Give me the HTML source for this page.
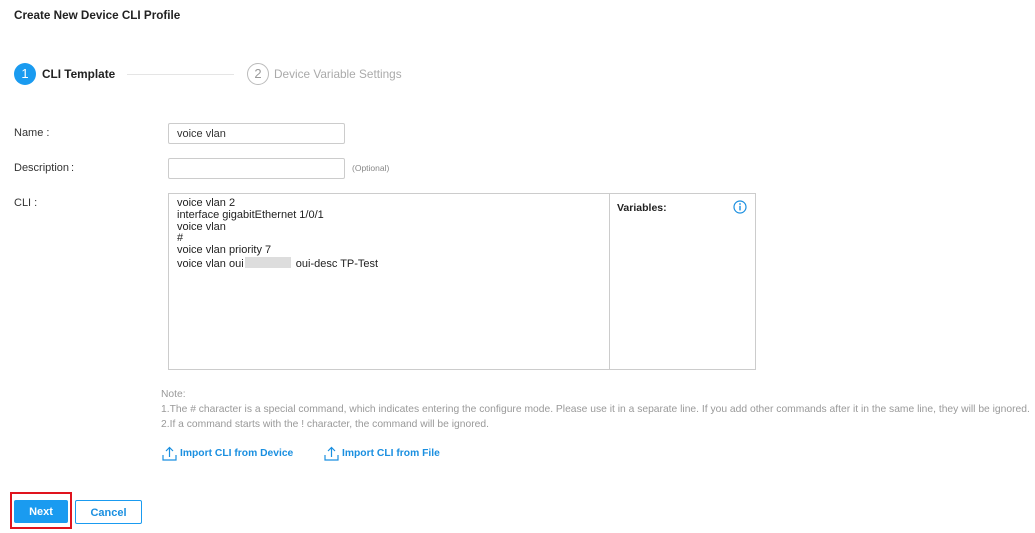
<!DOCTYPE html>
<html><head><style>
body{margin:0;width:1035px;height:533px;background:#fff;font-family:"Liberation Sans",sans-serif;position:relative;overflow:hidden;color:#333}
.a{position:absolute;white-space:nowrap}
.inp{position:absolute;border:1px solid #ccc;border-radius:2px;box-sizing:border-box;font-size:11px;padding:4px 8px;color:#333}
.lbl{font-size:11px;color:#333}
.note{font-size:10.3px;color:#999}
.lnk{font-size:10.3px;font-weight:bold;color:#1a8fe0}
</style></head><body>
<div class="a" style="left:14px;top:9px;font-size:11.7px;font-weight:bold;color:#222">Create New Device CLI Profile</div>
<div class="a" style="left:14px;top:63px;width:22px;height:22px;border-radius:50%;background:#1a9bf0;color:#fff;font-size:13px;text-align:center;line-height:22px">1</div>
<div class="a" style="left:42px;top:67px;font-size:11.8px;font-weight:bold;color:#222">CLI Template</div>
<div class="a" style="left:127px;top:74px;width:107px;height:1px;background:#e5e5e5"></div>
<div class="a" style="left:247px;top:63px;width:20px;height:20px;border-radius:50%;border:1px solid #bbb;color:#999;font-size:13px;text-align:center;line-height:20px">2</div>
<div class="a" style="left:274px;top:67px;font-size:11.8px;color:#aaa">Device Variable Settings</div>

<div class="a lbl" style="left:14px;top:127px">Name<span style="margin-left:3px">:</span></div>
<div class="inp" style="left:168px;top:123px;width:177px;height:21px">voice vlan</div>
<div class="a lbl" style="left:14px;top:162px">Description<span style="margin-left:2px">:</span></div>
<div class="inp" style="left:168px;top:158px;width:177px;height:21px"></div>
<div class="a" style="left:352px;top:163px;font-size:8.5px;color:#888">(Optional)</div>
<div class="a lbl" style="left:14px;top:197px">CLI<span style="margin-left:3px">:</span></div>
<div class="a" style="left:168px;top:193px;width:586px;height:175px;border:1px solid #ccc"></div>
<div class="a" style="left:609px;top:194px;width:1px;height:175px;background:#ccc"></div>
<div class="a" style="left:177px;top:198px;font-size:11px;line-height:11.8px;color:#222">voice vlan 2<br>interface gigabitEthernet 1/0/1<br>voice vlan<br>#<br>voice vlan priority 7<br>voice vlan oui <span style="display:inline-block;width:46px;height:11px;background:#ddd;vertical-align:-1px;margin:0 2px 0 -2px"></span> oui-desc TP-Test</div>
<div class="a" style="left:617px;top:202px;font-size:10.5px;font-weight:bold;color:#222">Variables:</div>
<svg class="a" style="left:733px;top:200px" width="14" height="14" viewBox="0 0 14 14"><circle cx="7" cy="7" r="6" fill="none" stroke="#1a8fe0" stroke-width="1.2"/><circle cx="7" cy="4" r=".9" fill="#1a8fe0"/><rect x="6.3" y="5.8" width="1.4" height="4.6" fill="#1a8fe0"/></svg>

<div class="a note" style="left:161px;top:389px">Note:</div>
<div class="a note" style="left:161px;top:404px">1.The # character is a special command, which indicates entering the configure mode. Please use it in a separate line. If you add other commands after it in the same line, they will be ignored.</div>
<div class="a note" style="left:161px;top:419px">2.If a command starts with the ! character, the command will be ignored.</div>

<svg class="a" style="left:162px;top:446px" width="15" height="15" viewBox="0 0 15 15" fill="none" stroke="#1a8fe0" stroke-width="1.2"><path d="M1 9v5h13V9M7.5 11V2M4 5l3.5-3.5L11 5"/></svg>
<div class="a lnk" style="left:180px;top:448px">Import CLI from Device</div>
<svg class="a" style="left:324px;top:446px" width="15" height="15" viewBox="0 0 15 15" fill="none" stroke="#1a8fe0" stroke-width="1.2"><path d="M1 9v5h13V9M7.5 11V2M4 5l3.5-3.5L11 5"/></svg>
<div class="a lnk" style="left:342px;top:448px">Import CLI from File</div>

<div class="a" style="left:10px;top:492px;width:58px;height:33px;border:2px solid #e0141e"></div>
<div class="a" style="left:14px;top:500px;width:54px;height:23px;background:#1a9bf0;border-radius:2px;color:#fff;font-size:11px;font-weight:bold;text-align:center;line-height:25px">Next</div>
<div class="a" style="left:75px;top:500px;width:65px;height:22px;border:1px solid #1a9bf0;border-radius:2px;color:#1a8fe0;font-size:11px;font-weight:bold;text-align:center;line-height:24px">Cancel</div>
</body></html>
